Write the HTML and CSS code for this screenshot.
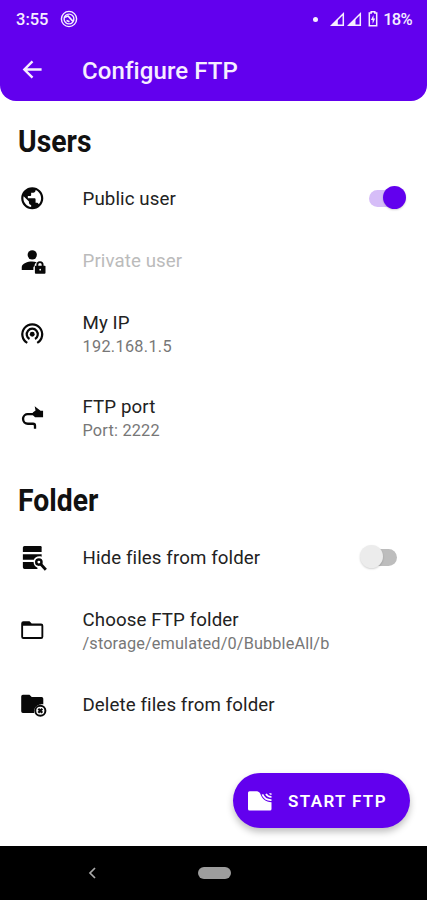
FILE: index.html
```html
<!DOCTYPE html>
<html lang="en">
<head>
<meta charset="utf-8">
<title>Configure FTP</title>
<link rel="stylesheet" href="styles.css">
</head>
<body>
<div class="screen">
  <header class="header">
    <div class="status">
      <span class="time">3:55</span>
      <svg class="status-app" viewBox="0 0 18 18"><circle cx="9" cy="9" r="7.600" fill="none" stroke="currentColor" stroke-width="1.400"/><circle cx="9" cy="9" r="4.900" fill="none" stroke="currentColor" stroke-width="1.400"/><path d="M5 7.200 8 6l5 5.400M6.500 10.500l3 1.300" fill="none" stroke="currentColor" stroke-width="1.700"/></svg>
      <span class="dot"></span>
      <svg class="signal" viewBox="0 0 15 15"><path d="M13.300 1.800v11.500H1.800z" fill="none" stroke="currentColor" stroke-width="1.500"/><path d="M1 14 7.800 6.500V14z" fill="currentColor"/></svg>
      <svg class="signal" viewBox="0 0 15 15"><path d="M13.300 1.800v11.500H1.800z" fill="none" stroke="currentColor" stroke-width="1.500"/><path d="M1 14 8.500 6.500V14z" fill="currentColor"/></svg>
      <svg class="battery" viewBox="0 0 10 16"><path d="M3.200 2V.8h3.600V2h1.900v12.800H1.300V2z" fill="none" stroke="currentColor" stroke-width="1.500"/><path d="M5.500 4 2.900 9h1.700v4l2.600-5.400H5.500z" fill="currentColor"/></svg>
      <span class="percent">18%</span>
    </div>
    <div class="toolbar">
      <svg class="back" viewBox="0 0 24 24"><path d="M21.500 12H4.500M12 3.500 3.500 12l8.500 8.500" fill="none" stroke="currentColor" stroke-width="2.500"/></svg>
      <h1 class="title">Configure FTP</h1>
    </div>
  </header>

  <main class="content">
    <h2 class="section users"><span>Users</span></h2>
    <div class="row">
      <svg class="icon" viewBox="0 0 24 24"><path d="M12 2C6.480 2 2 6.480 2 12s4.480 10 10 10 10-4.480 10-10S17.520 2 12 2zm-1 17.930c-3.950-.490-7-3.850-7-7.930 0-.620.080-1.210.210-1.790L9 15v1c0 1.100.900 2 2 2v1.930zm6.900-2.540c-.260-.810-1-1.390-1.900-1.390h-1v-3c0-.550-.450-1-1-1H8v-2h2c.550 0 1-.450 1-1V7h2c1.100 0 2-.900 2-2v-.410c2.930 1.190 5 4.060 5 7.410 0 2.080-.800 3.970-2.100 5.390z"/></svg>
      <div class="text drop"><div class="label">Public user</div></div>
      <span class="switch on"></span>
    </div>
    <div class="row disabled">
      <svg class="icon" viewBox="0 0 24 24"><circle cx="12" cy="6.200" r="4.200"/><path d="M2.500 20v-2.800c0-3.200 5.500-5 9.300-5 1.500 0 3 .2 4.300.7-1.700 1-2 2.200-2 3.300-.8.500-1.100 1-1.100 1.800v2z"/><path d="M16.600 16.500v-1.300a2.400 2.400 0 0 1 4.800 0v1.300" fill="none" stroke="#080808" stroke-width="1.700"/><rect x="14.400" y="16" width="9.600" height="7.300" rx=".8"/><circle cx="19.200" cy="19.600" r=".8" fill="#fff"/></svg>
      <div class="text"><div class="label">Private user</div></div>
    </div>
    <div class="row tall">
      <svg class="icon" viewBox="0 0 24 24"><circle cx="12" cy="12" r="2.200"/><g fill="none" stroke="#080808" stroke-width="2"><path d="M9.500 16.330a5 5 0 1 1 5 0"/><path d="M7.500 19.800a9 9 0 1 1 9 0"/></g></svg>
      <div class="text low"><div class="label">My IP</div><div class="sub s-ip">192.168.1.5</div></div>
    </div>
    <div class="row tall">
      <svg class="icon" viewBox="0 0 24 24"><path d="M14.500 21.500V18.800q0-1.800-1.800-1.800H8a4.300 4.300 0 0 1-4.300-4.300V12A4.200 4.200 0 0 1 8 8.300h7" fill="none" stroke="#080808" stroke-width="2.100"/><path d="M14.200 1.200 19.500 5.300H21.800V11H14.500L12.500 9V6.800L15 5z"/></svg>
      <div class="text low"><div class="label">FTP port</div><div class="sub s-port">Port: 2222</div></div>
    </div>
    <h2 class="section folder"><span>Folder</span></h2>
    <div class="row">
      <svg class="icon" viewBox="0 0 24 24"><path d="M5 1h14.500q1 0 1 1v4.300h-17V2.500Q3.500 1 5 1z"/><path d="M3.500 8.300h17v2.300c-3-1.100-6 .2-7.100 2.700H3.500z"/><path d="M3.500 15.300h9.700c.1 2.500 1.400 4.300 3.500 5.200v1.200H5q-1.500 0-1.500-1.500z"/><circle cx="18" cy="15.500" r="2.400" fill="none" stroke="#080808" stroke-width="2.200"/><path d="m19.800 17.400 4.500 5" stroke="#080808" stroke-width="2.500"/></svg>
      <div class="text"><div class="label">Hide files from folder</div></div>
      <span class="switch off"></span>
    </div>
    <div class="row tall">
      <svg class="icon" viewBox="0 0 24 24"><path fill-rule="evenodd" d="M4 3h5.500l2 2H20a2 2 0 0 1 2 2v10a2 2 0 0 1-2 2H4a2 2 0 0 1-2-2V5a2 2 0 0 1 2-2zm-.3 4v10.300h16.600V7z"/></svg>
      <div class="text"><div class="label">Choose FTP folder</div><div class="sub">/storage/emulated/0/BubbleAll/b</div></div>
    </div>
    <div class="row">
      <svg class="icon" viewBox="0 0 24 24"><path d="M3.500 2.500h6l2 2H20.500Q22 4.500 22 6v5.200c-5-.8-8.900 2.800-8.400 7.800H3.500Q2 19 2 17.500V4Q2 2.500 3.500 2.500z"/><circle cx="19.300" cy="17" r="4.600" fill="none" stroke="#080808" stroke-width="1.800"/><path d="m17.500 15.200 3.600 3.600m0-3.600-3.600 3.600" stroke="#080808" stroke-width="2"/></svg>
      <div class="text"><div class="label">Delete files from folder</div></div>
    </div>
    <button class="fab">
      <svg class="fab-icon" viewBox="0 0 26 22"><path d="M2.500 1.300H10c1.300 0 2.200 1 3.200 2.200 1.600 5.200 5.500 8.700 11.300 8.700V19q0 1.500-1.500 1.500H2.500Q1 20.500 1 19V2.800q0-1.500 1.500-1.500z" fill="currentColor"/><path d="M15.400 4.400a9.500 9.500 0 0 0 9.100 5.700M19 3.800a6 6 0 0 0 5.500 3" fill="none" stroke="currentColor" stroke-width="1.700"/><path d="M22 3.200h2.500V5Q22.600 5 22 3.200z" fill="currentColor"/></svg>
      <span>START FTP</span>
    </button>
  </main>

  <nav class="nav">
    <svg class="nav-back" viewBox="0 0 10 14"><path d="M8 2 3 7l5 5" fill="none" stroke="currentColor" stroke-width="1.700"/></svg>
    <span class="pill"></span>
  </nav>
</div>
</body>
</html>
```
FILE: styles.css
```css
* { box-sizing: border-box; }
body { margin: 0; background: #fff; font-family: Roboto, sans-serif; color: #222; }
svg { display: block; flex: none; overflow: visible; }
.screen { width: 427px; height: 900px; display: flex; flex-direction: column; overflow: hidden; }
.header { height: 101px; flex: none; background: #6200ee; color: #f6eeff; border-radius: 0 0 16px 16px; }
.status { height: 38px; display: flex; align-items: center; padding: 0 15px 0 16px; font-size: 16.500px; font-weight: 500; }
.time { width: 44px; }
.status-app { width: 18px; height: 18px; }
.dot { width: 5px; height: 5px; border-radius: 50%; background: currentColor; margin: 0 12px 0 auto; }
.signal { width: 15px; height: 15px; margin-right: 2px; }
.battery { width: 10px; height: 16px; margin: 0 5px 0 4px; }
.percent { letter-spacing: -0.700px; }
.toolbar { height: 63px; display: flex; align-items: center; padding-left: 21px; }
.back { width: 23px; height: 23px; }
.title { margin: 3px 0 0 38px; font-size: 24px; font-weight: 500; line-height: 30px; letter-spacing: .100px; }
.content { flex: 1; display: flex; flex-direction: column; }
.section { margin: 0; padding-left: 18px; display: flex; align-items: center; font-size: 32px; line-height: 40px; font-weight: 700; color: #111; }
.section span { transform: scaleX(.885); transform-origin: left; }
.users { height: 66px; padding-top: 13px; }
.folder { height: 67px; padding-top: 13px; }
.row { height: 62.500px; flex: none; display: flex; align-items: center; padding: 0 21px 0 19px; }
.tall { height: 84px; }
.icon { width: 26.500px; height: 26.500px; fill: #080808; }
.text { margin-left: 37px; flex: 1; white-space: nowrap; }
.low { padding-top: 2px; }
.drop { padding-top: 2px; }
.label { font-size: 18.700px; line-height: 24px; letter-spacing: .100px; }
.sub { font-size: 16.300px; line-height: 24px; letter-spacing: .130px; color: #777; }
.s-ip { letter-spacing: .300px; }
.s-port { letter-spacing: .200px; }
.disabled .label { color: #bbb; }
.switch { width: 37px; height: 24px; display: flex; align-items: center; position: relative; }
.switch::before { content: ""; width: 28px; height: 17px; border-radius: 9px; background: #d6bdf8; }
.switch::after { content: ""; position: absolute; top: 0; width: 23px; height: 23px; border-radius: 50%; box-shadow: 0 1px 2px rgba(0,0,0,.18); }
.on::after { right: 0; background: #6200ee; }
.off { margin: 0 9px 2px 0; justify-content: flex-end; }
.off::before { background: #bdbdbd; }
.off::after { left: 0; background: #ececec; }
.fab { width: 177px; height: 55px; margin: auto 17px 18px auto; padding: 0 0 0 14px; display: flex; align-items: center; gap: 15px; border: 0; border-radius: 28px; background: #6200ee; color: #fff; font: 600 17px/24px Roboto, sans-serif; letter-spacing: 1.350px; white-space: nowrap; box-shadow: 0 4px 7px rgba(0,0,0,.25); }
.fab-icon { width: 26px; height: 22px; }
.nav { height: 54px; flex: none; display: flex; align-items: center; background: #000; padding-left: 87px; }
.nav-back { width: 10px; height: 14px; color: #aaa; }
.pill { width: 33px; height: 12px; margin-left: 101px; border-radius: 6px; background: #9d9d9d; }
```
